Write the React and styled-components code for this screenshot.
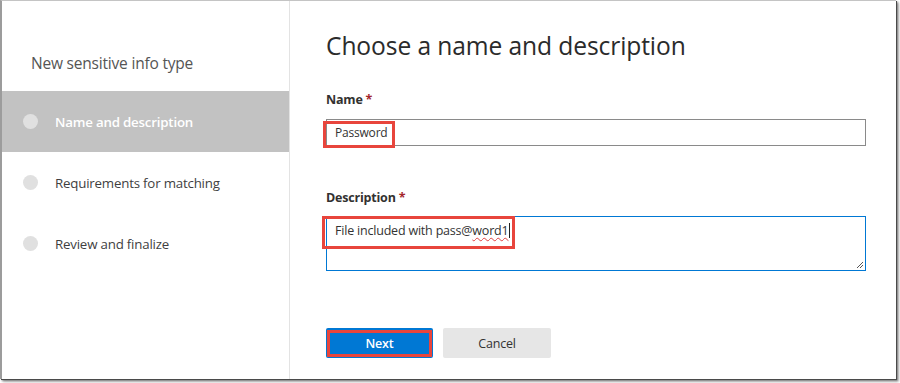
import React from "react";
import styled, { createGlobalStyle } from "styled-components";

const Global = createGlobalStyle`
  html, body { margin: 0; padding: 0; background: #ffffff; }
  body { font-family: "Open Sans", "Noto Sans", sans-serif; }
  * { box-sizing: border-box; }
`;

const Frame = styled.div`
  width: 900px;
  height: 383px;
  background: #ffffff;
  overflow: hidden;
`;

const Card = styled.div`
  width: 896px;
  height: 379px;
  display: flex;
  background: #ffffff;
  border-top: 1px solid #c4c4c4;
  border-left: 2px solid #9c9c9c;
  box-shadow: 1px 1px 0 #4a4a4a, 2px 2px 2px rgba(0, 0, 0, 0.45), 3px 3px 3px rgba(0, 0, 0, 0.2);
`;

const Sidebar = styled.nav`
  width: 288px;
  flex-shrink: 0;
  border-right: 1px solid #e3e3e3;
  display: flex;
  flex-direction: column;
`;

const SideTitle = styled.div`
  padding: 51px 0 0 29px;
  height: 90px;
  font-size: 15.5px;
  color: #555555;
  letter-spacing: -0.2px;
`;

const Step = styled.div`
  height: 61px;
  display: flex;
  align-items: center;
  padding-left: 21px;
  gap: 17px;
  background: ${(p) => (p.$active ? "#c2c2c2" : "transparent")};
  color: ${(p) => (p.$active ? "#ffffff" : "#3f3f3f")};
  font-size: 13.3px;
  font-weight: ${(p) => (p.$active ? 600 : 400)};
  letter-spacing: -0.2px;
`;

const Dot = styled.span`
  width: 15px;
  height: 15px;
  border-radius: 50%;
  background: #e0e0e0;
  flex-shrink: 0;
`;

const Main = styled.main`
  flex: 1;
  padding: 26px 0 0 36px;
  display: flex;
  flex-direction: column;
`;

const Heading = styled.h1`
  margin: 0;
  font-size: 24.6px;
  font-weight: 400;
  color: #2b2b2b;
  line-height: 38px;
  letter-spacing: -0.1px;
`;

const Label = styled.div`
  margin-top: ${(p) => p.$top}px;
  font-size: 12.5px;
  font-weight: 700;
  color: #323130;
  line-height: 18px;
  letter-spacing: -0.2px;
`;

const Required = styled.span`
  color: #a4262c;
  margin-left: 3px;
`;

const FieldWrap = styled.div`
  position: relative;
  width: 540px;
  margin-top: ${(p) => p.$top}px;
`;

const Input = styled.div`
  height: 27px;
  border: 1px solid #8a8a8a;
  padding: 0 8px;
  display: flex;
  align-items: center;
  font-size: 12px;
  color: #333333;
  letter-spacing: -0.2px;
`;

const TextArea = styled.div`
  height: 55px;
  border: 1px solid #0078d4;
  padding: 5px 8px;
  font-size: 12.5px;
  color: #333333;
  line-height: 18px;
  letter-spacing: -0.2px;
  position: relative;
`;

const Misspelled = styled.span`
  text-decoration: underline wavy #e04040;
  text-decoration-thickness: 1px;
  text-underline-offset: 2px;
`;

const Caret = styled.span`
  display: inline-block;
  width: 1px;
  height: 15px;
  background: #222222;
  margin-left: 1px;
  vertical-align: -3px;
`;

const Grip = styled.svg`
  position: absolute;
  right: 1px;
  bottom: 1px;
`;

const Highlight = styled.span`
  position: absolute;
  left: ${(p) => p.$x}px;
  top: ${(p) => p.$y}px;
  width: ${(p) => p.$w}px;
  height: ${(p) => p.$h}px;
  border: 3px solid #e8453c;
  pointer-events: none;
`;

const Buttons = styled.div`
  display: flex;
  gap: 10px;
  margin-top: 57px;
`;

const Button = styled.div`
  position: relative;
  width: ${(p) => (p.$primary ? 107 : 108)}px;
  height: 30px;
  border-radius: 2px;
  display: flex;
  align-items: center;
  justify-content: center;
  font-size: 12.5px;
  letter-spacing: -0.2px;
  font-weight: ${(p) => (p.$primary ? 600 : 400)};
  background: ${(p) => (p.$primary ? "#0078d4" : "#e6e6e6")};
  color: ${(p) => (p.$primary ? "#ffffff" : "#333333")};
`;

export default function App() {
  return (
    <Frame>
      <Global />
      <Card>
        <Sidebar>
          <SideTitle>New sensitive info type</SideTitle>
          <Step $active>
            <Dot />
            Name and description
          </Step>
          <Step>
            <Dot />
            Requirements for matching
          </Step>
          <Step>
            <Dot />
            Review and finalize
          </Step>
        </Sidebar>
        <Main>
          <Heading>Choose a name and description</Heading>
          <Label $top={26}>
            Name<Required>*</Required>
          </Label>
          <FieldWrap $top={10}>
            <Input>Password</Input>
            <Highlight $x={-3} $y={2} $w={72} $h={27} />
          </FieldWrap>
          <Label $top={43}>
            Description<Required>*</Required>
          </Label>
          <FieldWrap $top={9}>
            <TextArea>
              File included with pass@<Misspelled>word1</Misspelled>
              <Caret />
              <Grip width="10" height="10" viewBox="0 0 10 10">
                <path d="M9 3 L3 9 M9 6 L6 9" stroke="#555" strokeWidth="1" />
              </Grip>
            </TextArea>
            <Highlight $x={-4} $y={0} $w={193} $h={33} />
          </FieldWrap>
          <Buttons>
            <Button $primary>
              Next
              <Highlight $x={1} $y={2} $w={105} $h={27} />
            </Button>
            <Button>Cancel</Button>
          </Buttons>
        </Main>
      </Card>
    </Frame>
  );
}
